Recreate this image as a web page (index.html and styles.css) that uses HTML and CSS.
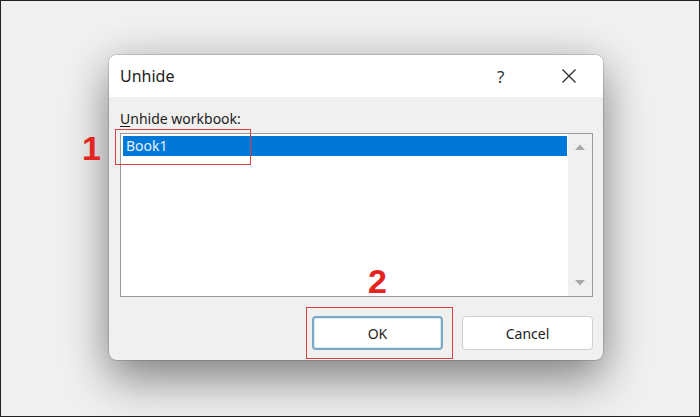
FILE: index.html
```html
<!DOCTYPE html>
<html>
<head>
<meta charset="utf-8">
<link rel="stylesheet" href="styles.css">
</head>
<body>
<div class="frame">
  <div class="dialog">
    <div class="titlebar">
      <span class="title">Unhide</span>
      <span class="help">?</span>
      <span class="close">
        <svg width="16" height="16" viewBox="0 0 16 16"><path d="M1.5 1.5 L14.5 14.5 M14.5 1.5 L1.5 14.5" stroke="#333" stroke-width="1.4" fill="none"/></svg>
      </span>
    </div>
    <div class="body">
      <div class="label"><u>U</u>nhide workbook:</div>
      <div class="listbox">
        <div class="items">
          <div class="item selected">Book1</div>
        </div>
        <div class="scrollbar">
          <svg width="12" height="8" viewBox="0 0 12 8"><path d="M1 7 L6 1.5 L11 7 Z" fill="#a8a8a8"/></svg>
          <svg width="12" height="8" viewBox="0 0 12 8"><path d="M1 1 L6 6.5 L11 1 Z" fill="#a8a8a8"/></svg>
        </div>
      </div>
      <div class="buttons">
        <button class="btn primary">OK</button>
        <button class="btn">Cancel</button>
      </div>
    </div>
  </div>
  <div class="mark mark1">1</div>
  <div class="box box1"></div>
  <div class="mark mark2">2</div>
  <div class="box box2"></div>
</div>
</body>
</html>
```

FILE: styles.css
```css
html, body {
  margin: 0;
  padding: 0;
}
body {
  width: 700px;
  height: 417px;
  overflow: hidden;
  font-family: "Noto Sans", "Open Sans", sans-serif;
}
.frame {
  position: relative;
  width: 700px;
  height: 417px;
  box-sizing: border-box;
  border: 1px solid #222;
  background: #f0f0f0;
  padding: 54px 0 0 108px;
}
.dialog {
  width: 494px;
  height: 305px;
  border-radius: 8px;
  overflow: hidden;
  background: #f0f0f0;
  display: flex;
  flex-direction: column;
  box-shadow: 0 0 0 1px rgba(0,0,0,0.14), 0 22px 45px rgba(0,0,0,0.38), 0 0 40px rgba(0,0,0,0.14);
}
.titlebar {
  height: 42px;
  background: #fff;
  display: flex;
  align-items: center;
  padding-left: 11px;
  flex-shrink: 0;
}
.title {
  font-size: 16px;
  color: #1c1c1c;
  flex: 1;
}
.help {
  font-size: 17px;
  color: #333;
  width: 20px;
  margin-right: 44px;
}
.close {
  width: 16px;
  height: 16px;
  margin-right: 26px;
  display: flex;
}
.body {
  flex: 1;
  padding: 12px 10px 10px 11px;
  display: flex;
  flex-direction: column;
}
.label {
  font-size: 14px;
  color: #1c1c1c;
  height: 20px;
  line-height: 20px;
  margin-bottom: 4px;
}
.label u {
  text-decoration-thickness: 1px;
  text-underline-offset: 2px;
}
.listbox {
  height: 164px;
  box-sizing: border-box;
  border: 1px solid #9a9a9a;
  background: #fff;
  display: flex;
}
.items {
  flex: 1;
  padding: 2px 1px 2px 2px;
}
.item {
  height: 20px;
  line-height: 20px;
  font-size: 14px;
  padding-left: 3px;
}
.selected {
  background: #0078d7;
  color: #e6f2ff;
}
.scrollbar {
  width: 24px;
  background: #f0f0f0;
  display: flex;
  flex-direction: column;
  justify-content: space-between;
  align-items: center;
  padding: 9px 0 9px;
}
.buttons {
  margin-top: 19px;
  display: flex;
  justify-content: flex-end;
  gap: 19px;
}
.btn {
  width: 131px;
  height: 34px;
  box-sizing: border-box;
  border: 1px solid #d0d0d0;
  border-radius: 4px;
  background: #fff;
  font-family: "Noto Sans", "Open Sans", sans-serif;
  font-size: 14px;
  color: #1c1c1c;
  padding: 0;
}
.primary {
  border: 2px solid #7ea9c6;
  box-shadow: inset 0 0 0 1px #d8ecf7;
}
.mark {
  position: absolute;
  font-family: "Liberation Sans", sans-serif;
  font-weight: bold;
  font-size: 34px;
  line-height: 1;
  color: #e32420;
}
.mark1 {
  left: 81px;
  top: 130px;
}
.mark2 {
  left: 367px;
  top: 263px;
}
.box {
  position: absolute;
  border: 1.5px solid #d9423f;
  box-sizing: border-box;
}
.box1 {
  left: 114px;
  top: 128px;
  width: 136px;
  height: 36px;
}
.box2 {
  left: 305px;
  top: 306px;
  width: 147px;
  height: 52px;
}
```
